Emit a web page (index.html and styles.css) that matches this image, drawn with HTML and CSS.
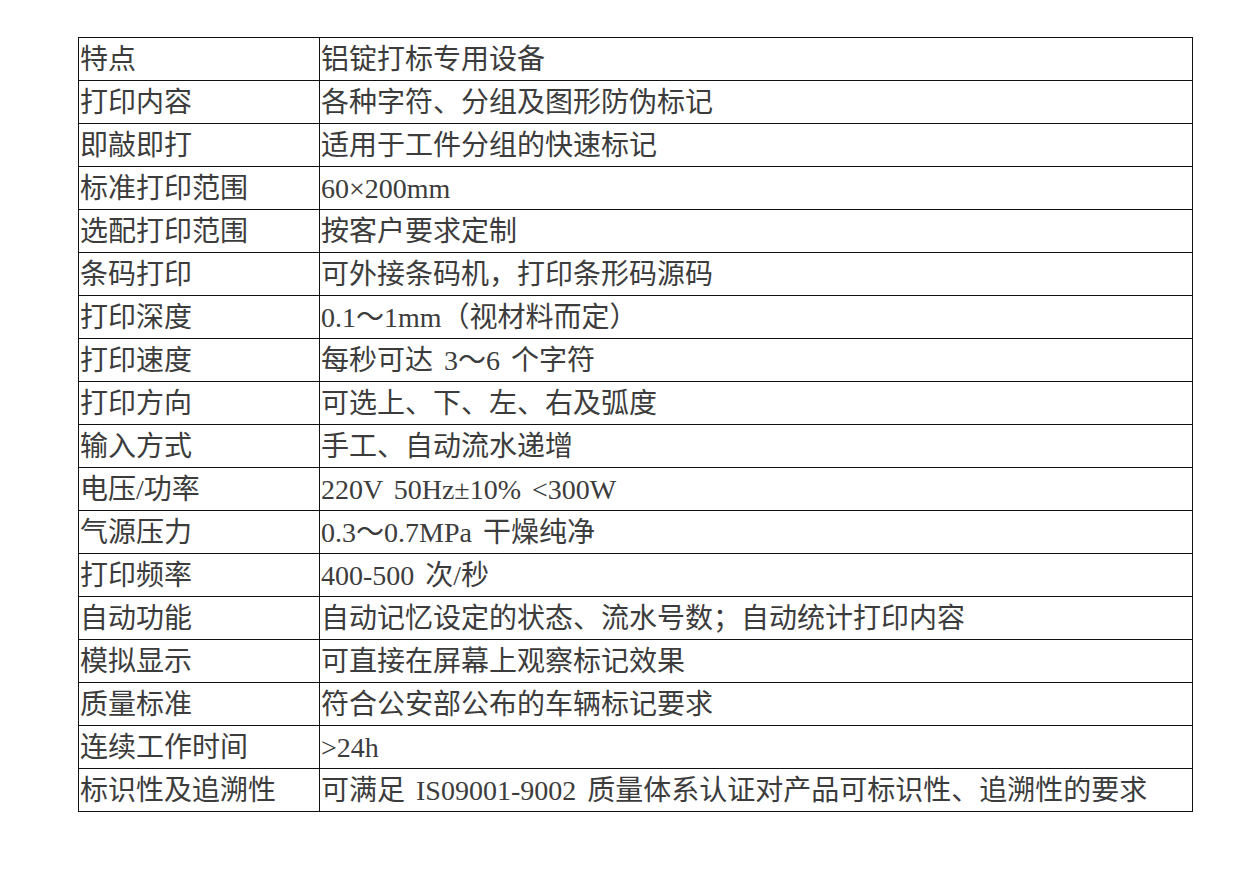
FILE: index.html
```html
<!DOCTYPE html>
<html lang="zh-CN">
<head>
<meta charset="utf-8">
<title>铝锭打标专用设备</title>
<link rel="stylesheet" href="styles.css">
</head>
<body>
<table class="spec">
<tr><td class="k">特点</td><td class="v">铝锭打标专用设备</td></tr>
<tr><td class="k">打印内容</td><td class="v">各种字符、分组及图形防伪标记</td></tr>
<tr><td class="k">即敲即打</td><td class="v">适用于工件分组的快速标记</td></tr>
<tr><td class="k">标准打印范围</td><td class="v">60×200mm</td></tr>
<tr><td class="k">选配打印范围</td><td class="v">按客户要求定制</td></tr>
<tr><td class="k">条码打印</td><td class="v">可外接条码机，打印条形码源码</td></tr>
<tr><td class="k">打印深度</td><td class="v">0.1～1mm（视材料而定）</td></tr>
<tr><td class="k">打印速度</td><td class="v">每秒可达 3～6 个字符</td></tr>
<tr><td class="k">打印方向</td><td class="v">可选上、下、左、右及弧度</td></tr>
<tr><td class="k">输入方式</td><td class="v">手工、自动流水递增</td></tr>
<tr><td class="k">电压/功率</td><td class="v">220V 50Hz±10% &lt;300W</td></tr>
<tr><td class="k">气源压力</td><td class="v">0.3～0.7MPa 干燥纯净</td></tr>
<tr><td class="k">打印频率</td><td class="v">400-500 次/秒</td></tr>
<tr><td class="k">自动功能</td><td class="v">自动记忆设定的状态、流水号数；自动统计打印内容</td></tr>
<tr><td class="k">模拟显示</td><td class="v">可直接在屏幕上观察标记效果</td></tr>
<tr><td class="k">质量标准</td><td class="v">符合公安部公布的车辆标记要求</td></tr>
<tr><td class="k">连续工作时间</td><td class="v">&gt;24h</td></tr>
<tr><td class="k">标识性及追溯性</td><td class="v">可满足 IS09001-9002 质量体系认证对产品可标识性、追溯性的要求</td></tr>
</table>
</body>
</html>
```
FILE: styles.css
```css
html, body {
  margin: 0;
  padding: 0;
  background: #ffffff;
}
body {
  padding: 37px 0 0 78px;
  font-family: "Liberation Serif", "Noto Sans CJK SC", serif;
  color: #3c3c3c;
}
.spec {
  border-collapse: collapse;
  width: 1115px;
  table-layout: fixed;
}
.spec td {
  border: 1px solid #111;
  height: 42px;
  padding: 2px 1px 0 1px;
  font-size: 28px;
  line-height: 40px;
  white-space: nowrap;
  vertical-align: middle;
  box-sizing: border-box;
}
.spec td.k {
  width: 241px;
}
.spec td.v {
  word-spacing: 4px;
}
```
